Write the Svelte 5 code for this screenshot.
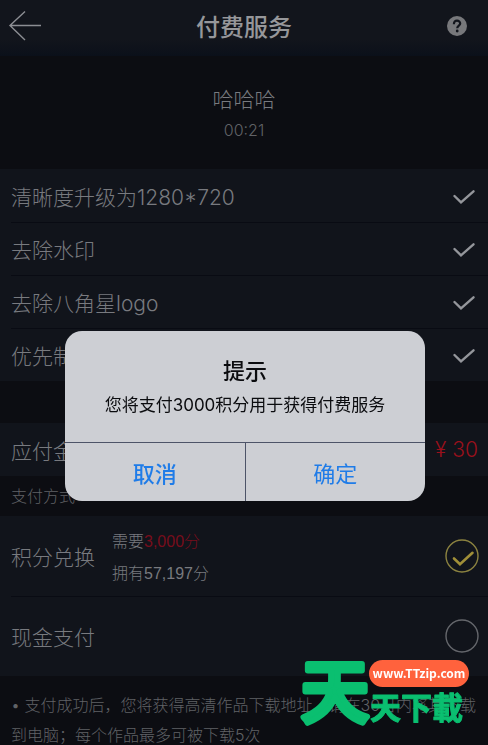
<script>
  const features = ['清晰度升级为1280*720', '去除水印', '去除八角星logo', '优先制作'];
  let method = $state('points');
</script>

<div class="page">
  <header class="bar">
    <button class="icon-button back" aria-label="返回">
      <svg width="34" height="32" viewBox="0 0 34 32" fill="none" stroke="#8c8e93" stroke-width="1.4">
        <path d="M17 1.500L2 15.500L17 30M2 15.500H33" />
      </svg>
    </button>
    <h1>付费服务</h1>
    <button class="icon-button" aria-label="帮助">
      <svg width="20" height="20" viewBox="0 0 20 20">
        <circle cx="10" cy="10" r="10" fill="#77787b" />
        <path d="M6.900 8.200C6.900 5.900 8.100 4.700 10 4.700S13.200 5.800 13.200 7.500C13.200 9.500 10.200 9.700 10.200 12.200" fill="none" stroke="#12151c" stroke-width="2.200" />
        <circle cx="10.200" cy="15" r="1.400" fill="#12151c" />
      </svg>
    </button>
  </header>

  <section class="work">
    <h2>哈哈哈</h2>
    <time>00:21</time>
  </section>

  <ul class="panel">
    {#each features as feature}
      <li class="row">
        <span>{feature}</span>
        <svg class="tick" width="22" height="16" viewBox="0 -2 22 16" fill="none" stroke="#94969b" stroke-width="2.400" stroke-linecap="round">
          <path d="M1.500 6L8 12.300L20.500 1.300" />
        </svg>
      </li>
    {/each}
  </ul>

  <div class="panel due">
    <div class="row"><span>应付金额</span><strong class="price">¥ 30</strong></div>
  </div>

  <fieldset>
    <legend>支付方式</legend>
    <div class="panel">
      <label class="row method">
        <span>积分兑换</span>
        <span class="detail">
          <span>需要<em>3,000分</em></span>
          <span>拥有57,197分</span>
        </span>
        <input type="radio" name="method" value="points" bind:group={method} />
        <svg class="choice" width="34" height="34" viewBox="0 0 34 34" fill="none">
          <circle cx="17" cy="17" r="16" stroke="currentColor" stroke-width="1.400" />
          <path class="mark" d="M9 19.500L15 25.300L27.500 13.800" stroke="#a08f38" stroke-width="2.600" stroke-linecap="round" />
        </svg>
      </label>
      <label class="row method">
        <span>现金支付</span>
        <input type="radio" name="method" value="cash" bind:group={method} />
        <svg class="choice" width="34" height="34" viewBox="0 0 34 34" fill="none">
          <circle cx="17" cy="17" r="16" stroke="currentColor" stroke-width="1.400" />
          <path class="mark" d="M9 19.500L15 25.300L27.500 13.800" stroke="#a08f38" stroke-width="2.600" stroke-linecap="round" />
        </svg>
      </label>
    </div>
  </fieldset>

  <p class="note">• 支付成功后，您将获得高清作品下载地址，请在30日内将其下载到电脑；每个作品最多可被下载5次</p>
</div>

<div class="overlay">
  <div class="dialog" role="alertdialog" aria-labelledby="tip-title" aria-describedby="tip-text">
    <div class="message">
      <h3 id="tip-title">提示</h3>
      <p id="tip-text">您将支付3000积分用于获得付费服务</p>
    </div>
    <div class="actions">
      <button class="cancel">取消</button>
      <button>确定</button>
    </div>
  </div>
</div>

<svg class="brand" width="170" height="72" viewBox="0 0 170 72">
  <g fill="#0abf70" stroke="#0abf70" stroke-linejoin="round">
    <text class="big" x="2" y="62" font-size="68" stroke-width="6">天</text>
    <text x="71" y="64" font-size="31" stroke-width="1">天下載</text>
  </g>
  <rect x="70" y="5" width="100" height="27" rx="13.500" fill="#ff623d" />
  <text class="url" x="120" y="23" font-size="12" text-anchor="middle" fill="#fff">www.TTzip.com</text>
</svg>

<style>
  :global(body) {
    margin: 0;
    background: #0c0d12;
  }
  .page,
  .overlay,
  .brand {
    font-family: Inter, 'Noto Sans CJK SC', sans-serif;
  }
  .page {
    height: 100vh;
    overflow-y: auto;
    scrollbar-width: none;
    background: #0c0d12;
    color: #787a7f;
    font-size: 21px;
    font-weight: 300;
  }
  h1, h2, h3, p, ul, fieldset {
    margin: 0;
    padding: 0;
    border: 0;
    font-weight: inherit;
  }
  button {
    font: inherit;
    padding: 0;
    border: 0;
    background: none;
    cursor: pointer;
  }
  .bar {
    display: grid;
    grid-template-columns: 60px 1fr 62px;
    align-items: center;
    height: 56px;
    padding: 0 0 4px;
    box-sizing: border-box;
    background: linear-gradient(#12151c 70%, #0b101a);
  }
  h1 {
    padding: 4px 0 0 2px;
    text-align: center;
    font-size: 24px;
    line-height: 36px;
    font-weight: 500;
    color: #96979a;
  }
  .icon-button {
    display: flex;
    justify-content: center;
  }
  .back {
    justify-content: flex-start;
    padding-left: 8px;
  }
  .work {
    display: flex;
    flex-direction: column;
    align-items: center;
    height: 113px;
    box-sizing: border-box;
    padding-top: 29px;
  }
  h2 {
    font-size: 21px;
    line-height: 30px;
  }
  time {
    font-size: 16px;
    line-height: 30px;
    color: #606266;
  }
  .panel {
    background: #11141b;
    list-style: none;
  }
  .row {
    display: flex;
    align-items: center;
    justify-content: space-between;
    min-height: 53px;
    padding: 0 13px 0 11px;
    position: relative;
  }
  .row + .row::before {
    content: '';
    position: absolute;
    top: 0;
    left: 11px;
    right: 0;
    height: 1px;
    background: #090b13;
  }
  .due {
    margin-top: 42px;
  }
  .due .row {
    padding-right: 10px;
  }
  .price {
    font-weight: 300;
    font-size: 21px;
    color: #9a101c;
  }
  legend {
    padding: 0 11px;
    font-size: 16px;
    line-height: 40px;
    color: #606266;
  }
  .method {
    min-height: 80px;
    padding-right: 9px;
    justify-content: flex-start;
    gap: 17px;
  }
  .detail {
    display: flex;
    flex-direction: column;
    padding-top: 4px;
    font-family: 'Liberation Sans', 'Noto Sans CJK SC', sans-serif;
    font-size: 16px;
    line-height: 32px;
  }
  em {
    font-style: normal;
    color: #780d1b;
  }
  input {
    position: absolute;
    opacity: 0;
  }
  .choice {
    margin-left: auto;
    color: #65676c;
  }
  .mark {
    display: none;
  }
  input:checked + .choice {
    color: #8c8340;
  }
  input:checked + .choice .mark {
    display: inline;
  }
  .note {
    padding: 14px 11px 0;
    font-size: 16px;
    line-height: 30px;
    color: #606266;
  }
  .overlay {
    position: fixed;
    inset: 0;
    display: flex;
    justify-content: center;
    align-items: flex-start;
    padding: 331px 62px 0 64px;
  }
  .dialog {
    width: 100%;
    max-width: 360px;
    overflow: hidden;
    border-radius: 17px;
    background: #cdcfd4;
    color: #0b0c0f;
    text-align: center;
  }
  .message {
    padding: 24px 16px 20px;
  }
  h3 {
    font-size: 22px;
    line-height: 32px;
    font-weight: 500;
  }
  .message p {
    padding-top: 2px;
    font-size: 17px;
    line-height: 33px;
  }
  .actions {
    display: flex;
    border-top: 1px solid #4d5468;
  }
  .actions button {
    flex: 1;
    height: 58px;
    font-size: 22px;
    color: #1f7ce8;
  }
  .actions .cancel {
    font-weight: 500;
    border-right: 1px solid #4d5468;
  }
  .brand {
    position: fixed;
    right: 19px;
    bottom: 18px;
    overflow: visible;
    font-weight: 700;
  }
  .big {
    font-weight: 500;
  }
  .url {
    font-family: 'Noto Sans CJK SC', sans-serif;
  }
</style>
